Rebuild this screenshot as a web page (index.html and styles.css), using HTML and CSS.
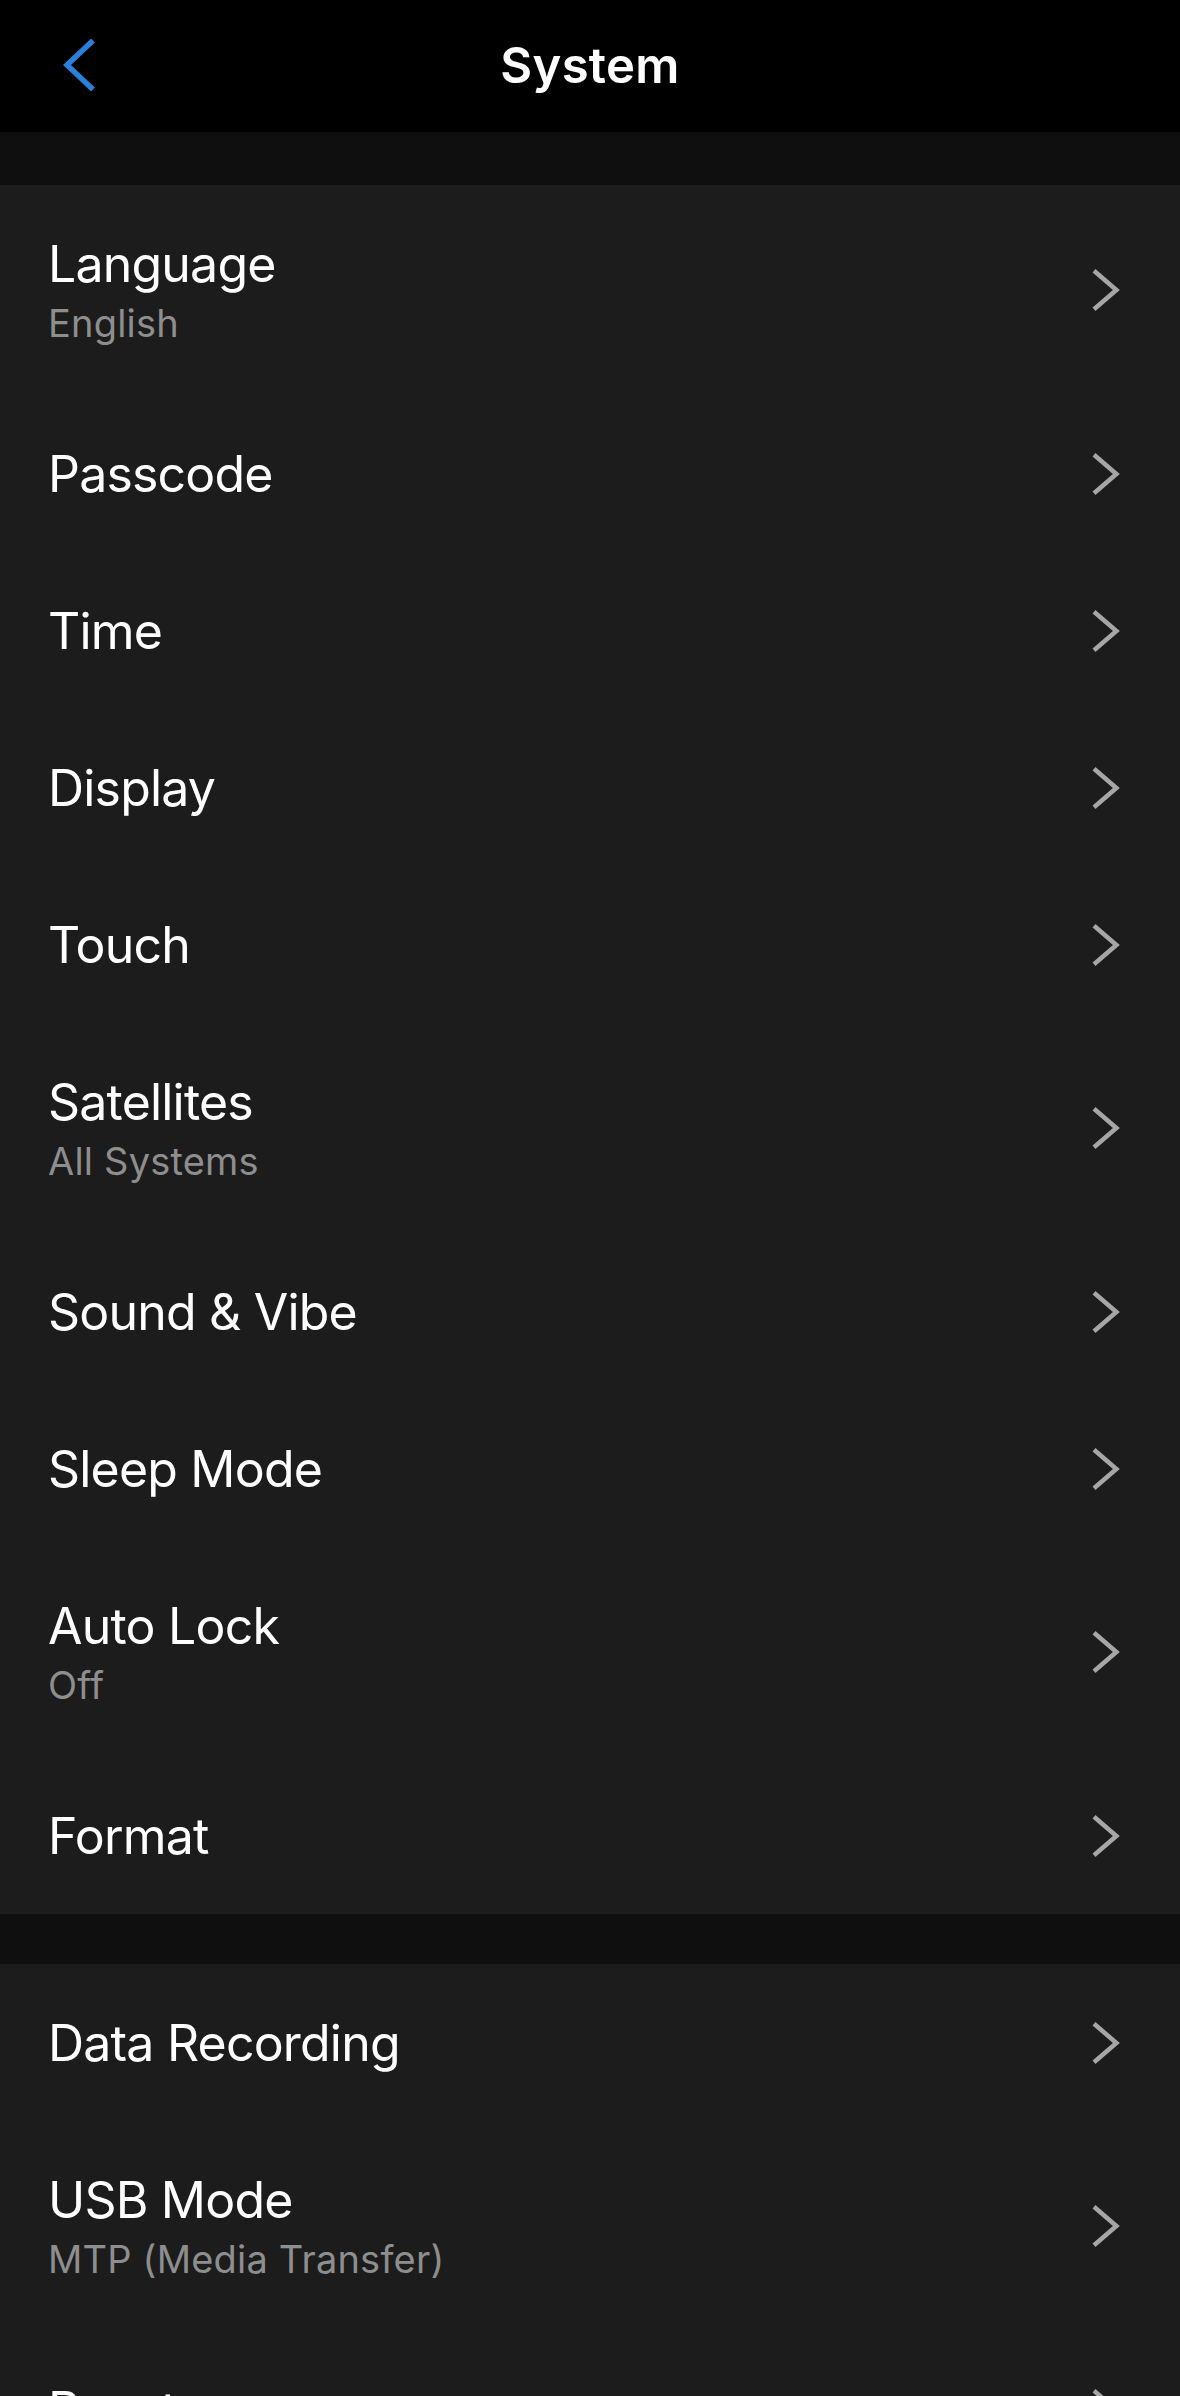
FILE: index.html
```html
<!doctype html>
<html lang="en">
  <head>
    <meta charset="UTF-8" />
    <title>System</title>
    <link rel="stylesheet" href="styles.css">
  </head>
  <body>
    <div class="settings-page">
      <header class="settings-header">
        <button class="settings-back" aria-label="Back">
          <svg width="40" height="60" viewBox="0 0 40 60">
            <path d="M33 4.5 L7 29 L33 53.5" fill="none" stroke="#2a7fdb" stroke-width="5.5" />
          </svg>
        </button>
        <h1 class="settings-title">System</h1>
        <span></span>
      </header>

      <section class="settings-group first">
        <div class="settings-row double">
          <div class="settings-text">
            <span class="settings-label">Language</span>
            <span class="settings-value">English</span>
          </div>
          <svg class="settings-chevron" width="30" height="48" viewBox="0 0 30 48"><path d="M4 4.7 L26.4 24 L4 43.3" /></svg>
        </div>
        <div class="settings-row">
          <div class="settings-text"><span class="settings-label">Passcode</span></div>
          <svg class="settings-chevron" width="30" height="48" viewBox="0 0 30 48"><path d="M4 4.7 L26.4 24 L4 43.3" /></svg>
        </div>
        <div class="settings-row">
          <div class="settings-text"><span class="settings-label">Time</span></div>
          <svg class="settings-chevron" width="30" height="48" viewBox="0 0 30 48"><path d="M4 4.7 L26.4 24 L4 43.3" /></svg>
        </div>
        <div class="settings-row">
          <div class="settings-text"><span class="settings-label">Display</span></div>
          <svg class="settings-chevron" width="30" height="48" viewBox="0 0 30 48"><path d="M4 4.7 L26.4 24 L4 43.3" /></svg>
        </div>
        <div class="settings-row">
          <div class="settings-text"><span class="settings-label">Touch</span></div>
          <svg class="settings-chevron" width="30" height="48" viewBox="0 0 30 48"><path d="M4 4.7 L26.4 24 L4 43.3" /></svg>
        </div>
        <div class="settings-row double">
          <div class="settings-text">
            <span class="settings-label">Satellites</span>
            <span class="settings-value">All Systems</span>
          </div>
          <svg class="settings-chevron" width="30" height="48" viewBox="0 0 30 48"><path d="M4 4.7 L26.4 24 L4 43.3" /></svg>
        </div>
        <div class="settings-row">
          <div class="settings-text"><span class="settings-label">Sound &amp; Vibe</span></div>
          <svg class="settings-chevron" width="30" height="48" viewBox="0 0 30 48"><path d="M4 4.7 L26.4 24 L4 43.3" /></svg>
        </div>
        <div class="settings-row">
          <div class="settings-text"><span class="settings-label">Sleep Mode</span></div>
          <svg class="settings-chevron" width="30" height="48" viewBox="0 0 30 48"><path d="M4 4.7 L26.4 24 L4 43.3" /></svg>
        </div>
        <div class="settings-row double">
          <div class="settings-text">
            <span class="settings-label">Auto Lock</span>
            <span class="settings-value">Off</span>
          </div>
          <svg class="settings-chevron" width="30" height="48" viewBox="0 0 30 48"><path d="M4 4.7 L26.4 24 L4 43.3" /></svg>
        </div>
        <div class="settings-row">
          <div class="settings-text"><span class="settings-label">Format</span></div>
          <svg class="settings-chevron" width="30" height="48" viewBox="0 0 30 48"><path d="M4 4.7 L26.4 24 L4 43.3" /></svg>
        </div>
      </section>

      <section class="settings-group">
        <div class="settings-row">
          <div class="settings-text"><span class="settings-label">Data Recording</span></div>
          <svg class="settings-chevron" width="30" height="48" viewBox="0 0 30 48"><path d="M4 4.7 L26.4 24 L4 43.3" /></svg>
        </div>
        <div class="settings-row double">
          <div class="settings-text">
            <span class="settings-label">USB Mode</span>
            <span class="settings-value">MTP (Media Transfer)</span>
          </div>
          <svg class="settings-chevron" width="30" height="48" viewBox="0 0 30 48"><path d="M4 4.7 L26.4 24 L4 43.3" /></svg>
        </div>
        <div class="settings-row">
          <div class="settings-text"><span class="settings-label">Reset</span></div>
          <svg class="settings-chevron" width="30" height="48" viewBox="0 0 30 48"><path d="M4 4.7 L26.4 24 L4 43.3" /></svg>
        </div>
      </section>
    </div>
  </body>
</html>
```

FILE: styles.css
```css
:root {
  --page-bg: #0f0f0f;
  --row-bg: #1c1c1c;
  --header-bg: #000000;
  --label-text: #ffffff;
  --value-text: #8e8e8e;
  --chevron: #a6a6a6;
}

* {
  box-sizing: border-box;
  font-family: "Inter", "Liberation Sans", sans-serif;
}

body {
  margin: 0;
  background-color: var(--page-bg);
}

.settings-page {
  display: flex;
  flex-direction: column;
  min-height: 100vh;
}

.settings-header {
  height: 132px;
  background: var(--header-bg);
  display: grid;
  grid-template-columns: 1fr auto 1fr;
  align-items: center;
}

.settings-back {
  justify-self: start;
  background: none;
  border: none;
  padding: 0 0 0 60px;
  margin: 0;
  display: flex;
  cursor: pointer;
}

.settings-title {
  margin: 0;
  color: var(--label-text);
  font-size: 49px;
  font-weight: 600;
  line-height: 60px;
  letter-spacing: 0.3px;
}

.settings-group {
  background: var(--row-bg);
  margin-top: 53px;
}

.settings-group + .settings-group {
  margin-top: 50px;
}

.settings-row {
  height: 157px;
  display: flex;
  align-items: center;
  justify-content: space-between;
  padding: 0 60px 0 48px;
}

.settings-row.double {
  height: 210px;
}

.settings-text {
  display: flex;
  flex-direction: column;
}

.settings-label {
  color: var(--label-text);
  font-size: 50px;
  line-height: 66px;
  letter-spacing: -0.8px;
}

.settings-value {
  color: var(--value-text);
  font-size: 38px;
  line-height: 52px;
  letter-spacing: 0.2px;
}

.settings-chevron path {
  fill: none;
  stroke: var(--chevron);
  stroke-width: 4.5;
}
```
